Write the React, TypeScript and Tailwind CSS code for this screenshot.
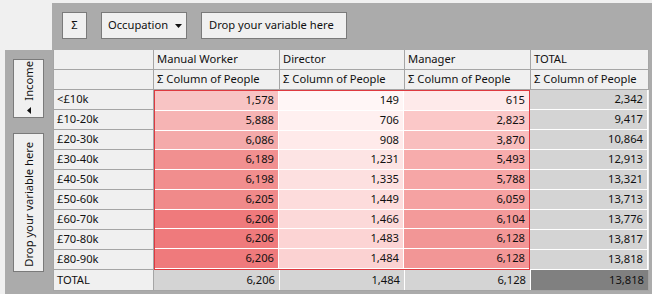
import React from "react";

type Row = {
  label: string;
  vals: [string, string, string, string];
  bg: [string, string, string];
};

const rows: Row[] = [
  { label: "<£10k", vals: ["1,578", "149", "615", "2,342"], bg: ["bg-[#f8c4c4]", "bg-[#fff6f6]", "bg-[#feeaea]"] },
  { label: "£10-20k", vals: ["5,888", "706", "2,823", "9,417"], bg: ["bg-[#f6b4b4]", "bg-[#fff0f0]", "bg-[#fbc8c8]"] },
  { label: "£20-30k", vals: ["6,086", "908", "3,870", "10,864"], bg: ["bg-[#f4aaaa]", "bg-[#ffeaea]", "bg-[#f9bebe]"] },
  { label: "£30-40k", vals: ["6,189", "1,231", "5,493", "12,913"], bg: ["bg-[#f19090]", "bg-[#fde4e4]", "bg-[#f7acac]"] },
  { label: "£40-50k", vals: ["6,198", "1,335", "5,788", "13,321"], bg: ["bg-[#f18e8e]", "bg-[#fde0e0]", "bg-[#f6a6a6]"] },
  { label: "£50-60k", vals: ["6,205", "1,449", "6,059", "13,713"], bg: ["bg-[#f08a8a]", "bg-[#fddcdc]", "bg-[#f5a2a2]"] },
  { label: "£60-70k", vals: ["6,206", "1,466", "6,104", "13,776"], bg: ["bg-[#ef7a7c]", "bg-[#fcd9d9]", "bg-[#f39a9a]"] },
  { label: "£70-80k", vals: ["6,206", "1,483", "6,128", "13,817"], bg: ["bg-[#ef7a7c]", "bg-[#fcd4d4]", "bg-[#f29696]"] },
  { label: "£80-90k", vals: ["6,206", "1,484", "6,128", "13,818"], bg: ["bg-[#ef7a7c]", "bg-[#fbd2d2]", "bg-[#f29696]"] },
];

const dataW = ["w-[124px]", "w-[125px]", "w-[125px]"];

function HeadCell({ w, children }: { w: string; children?: React.ReactNode }) {
  return (
    <div className={`${w} h-[20px] box-border border-r border-b border-[#a5a5a5] bg-[#f0f0f0] pl-[3px] flex items-center whitespace-nowrap overflow-hidden`}>
      {children}
    </div>
  );
}

export default function App() {
  return (
    <div
      className="w-[652px] h-[294px] bg-[#f0f0f0] pt-[3px] overflow-hidden text-[11.2px] text-[#111]"
      style={{ fontFamily: '"Noto Sans", "Open Sans", sans-serif' }}
    >
      {/* top bar */}
      <div className="ml-[52px] h-[47px] bg-[#ababab] pl-[10px] pt-[9px] flex gap-[14px] items-start">
        <div className="w-[25px] h-[27px] box-border border border-[#7a7a7a] bg-[#f0f0f0] flex items-center justify-center">
          Σ
        </div>
        <div className="w-[86px] h-[27px] box-border border border-[#7a7a7a] bg-[#f0f0f0] flex items-center pl-[6px] gap-[7px]">
          <span>Occupation</span>
          <svg width="7" height="4" viewBox="0 0 7 4">
            <path d="M0 0h7L3.5 4z" fill="#111" />
          </svg>
        </div>
        <div className="w-[146px] h-[27px] box-border border border-[#7a7a7a] bg-[#f0f0f0] flex items-center pl-[7px]">
          Drop your variable here
        </div>
      </div>

      <div className="flex">
        {/* left bar */}
        <div className="ml-[5px] w-[48px] h-[244px] bg-[#ababab] pl-[8px] pt-[9px] flex flex-col gap-[15px]">
          <div className="w-[31px] h-[59px] box-border border border-[#7a7a7a] bg-[#f0f0f0] flex flex-col items-center justify-end pb-[3px] gap-[6px]">
            <span className="[writing-mode:vertical-rl] rotate-180 leading-none">Income</span>
            <svg width="4" height="7" viewBox="0 0 4 7">
              <path d="M4 0v7L0 3.5z" fill="#111" />
            </svg>
          </div>
          <div className="w-[31px] h-[139px] box-border border border-[#7a7a7a] bg-[#f0f0f0] flex items-center justify-center pt-[4px]">
            <span className="[writing-mode:vertical-rl] rotate-180 leading-none whitespace-nowrap">Drop your variable here</span>
          </div>
        </div>

        {/* table area */}
        <div className="w-[599px] h-[244px] bg-[#ababab] flex flex-col">
          <div className="w-[596px] box-border border-l border-[#a5a5a5] bg-[#f0f0f0] flex flex-col">
            <div className="flex">
              <HeadCell w="w-[100px]" />
              <HeadCell w="w-[126px]">Manual Worker</HeadCell>
              <HeadCell w="w-[125px]">Director</HeadCell>
              <HeadCell w="w-[126px]">Manager</HeadCell>
              <HeadCell w="w-[118px]">TOTAL</HeadCell>
            </div>
            <div className="flex">
              <HeadCell w="w-[100px]" />
              <HeadCell w="w-[126px]">Σ Column of People</HeadCell>
              <HeadCell w="w-[125px]">Σ Column of People</HeadCell>
              <HeadCell w="w-[126px]">Σ Column of People</HeadCell>
              <HeadCell w="w-[118px]">Σ Column of People</HeadCell>
            </div>
            <div className="flex">
              <div className="flex flex-col w-[100px]">
                {rows.map((r) => (
                  <div key={r.label} className="h-[20px] box-border border-b border-r border-[#a5a5a5] pl-[3px] flex items-center">
                    {r.label}
                  </div>
                ))}
              </div>
              <div className="w-[376px] h-[180px] box-border border border-[#de3a40] flex flex-col">
                {rows.map((r) => (
                  <div key={r.label} className="flex-1 flex">
                    {r.bg.map((bg, i) => (
                      <div
                        key={i}
                        className={`${dataW[i]} ${bg} h-full box-border border-b border-r border-white last:border-r-0 pr-[4px] flex items-center justify-end`}
                      >
                        {r.vals[i]}
                      </div>
                    ))}
                  </div>
                ))}
              </div>
              <div className="flex flex-col w-[118px]">
                {rows.map((r) => (
                  <div key={r.label} className="h-[20px] box-border border-b border-r border-white bg-[#d4d4d4] pr-[4px] flex items-center justify-end">
                    {r.vals[3]}
                  </div>
                ))}
              </div>
            </div>
            <div className="flex h-[21px] box-border border-b border-[#a5a5a5]">
              <div className="w-[100px] box-border border-r border-[#a5a5a5] pl-[3px] flex items-center">TOTAL</div>
              <div className="w-[126px] box-border border-r border-white bg-[#d4d4d4] pr-[4px] flex items-center justify-end">6,206</div>
              <div className="w-[125px] box-border border-r border-white bg-[#d4d4d4] pr-[4px] flex items-center justify-end">1,484</div>
              <div className="w-[126px] box-border border-r border-white bg-[#d4d4d4] pr-[4px] flex items-center justify-end">6,128</div>
              <div className="w-[118px] box-border border-r border-[#a5a5a5] bg-[#808080] pr-[4px] flex items-center justify-end">13,818</div>
            </div>
          </div>
        </div>
      </div>
    </div>
  );
}
